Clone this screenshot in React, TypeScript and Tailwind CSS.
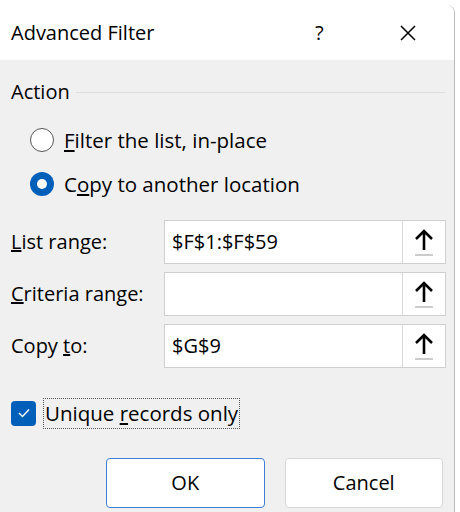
import React from "react";

function Arrow() {
  return (
    <svg width="22" height="30" viewBox="0 0 22 30">
      <path d="M11 4 V23 M3 12 L11 4 L19 12" stroke="#000" strokeWidth="2.6" fill="none" />
      <line x1="2" y1="28" x2="20" y2="28" stroke="#999" strokeWidth="1" />
    </svg>
  );
}

function Field({ label, value }: { label: React.ReactNode; value: string }) {
  return (
    <div className="flex items-center h-[44px]">
      <div className="w-[153px] text-[20px]">{label}</div>
      <div className="flex-1 flex h-[44px] border border-[#d0d0d0] bg-white">
        <div className="flex-1 flex items-center pl-[7px] text-[20px]">{value}</div>
        <div className="w-[43px] border-l border-[#d8d8d8] flex items-center justify-center">
          <Arrow />
        </div>
      </div>
    </div>
  );
}

export default function App() {
  return (
    <div className="w-[460px] h-[512px] bg-white overflow-hidden pt-[5px] text-black" style={{ fontFamily: '"Open Sans", "Noto Sans", sans-serif' }}>
      <div className="w-[455px] h-[520px] rounded-tr-[8px] border-r border-[#bbb] bg-[#f0f0f0]">
        <div className="h-[55px] bg-white flex items-center pl-[11px] rounded-tr-[8px]">
          <div className="flex-1 text-[20px]">Advanced Filter</div>
          <div className="w-[84px] text-[20px]">?</div>
          <svg width="18" height="18" viewBox="0 0 18 18" className="mr-[37px]">
            <path d="M2 2 L16 16 M16 2 L2 16" stroke="#000" strokeWidth="1.5" />
          </svg>
        </div>
        <div className="px-[11px]">
          <div className="flex items-center h-[32px] mt-[16px]">
            <span className="text-[20px]">Action</span>
            <div className="flex-1 ml-[6px] border-t border-[#dcdcdc] mr-[-2px]" />
          </div>
          <div className="flex items-center mt-[14px] h-[36px] ml-[19px]">
            <div className="w-[24px] h-[24px] rounded-full border border-[#555] bg-white" />
            <span className="ml-[10px] text-[20.5px]"><u>F</u>ilter the list, in-place</span>
          </div>
          <div className="flex items-center mt-[8px] h-[36px] ml-[19px]">
            <div className="w-[24px] h-[24px] rounded-full bg-[#005fb8] flex items-center justify-center">
              <div className="w-[10px] h-[10px] rounded-full bg-white" />
            </div>
            <span className="ml-[10px] text-[20.5px]">C<u>o</u>py to another location</span>
          </div>
          <div className="mt-[18px] flex flex-col gap-[8px] w-[435px]">
            <Field label={<><u>L</u>ist range:</>} value="$F$1:$F$59" />
            <Field label={<><u>C</u>riteria range:</>} value="" />
            <Field label={<>Copy <u>t</u>o:</>} value="$G$9" />
          </div>
          <div className="flex items-center mt-[29px] h-[32px]">
            <div className="w-[25px] h-[25px] rounded-[4px] bg-[#005fb8] flex items-center justify-center">
              <svg width="14" height="14" viewBox="0 0 14 14"><path d="M2 7 L5.5 10.5 L12 3.5" stroke="#fff" strokeWidth="1.4" fill="none" /></svg>
            </div>
            <span className="ml-[7px] px-[1px] border border-dotted border-[#555] text-[20.5px] leading-[29px]">Unique <u>r</u>ecords only</span>
          </div>
          <div className="flex mt-[29px] ml-[95px] gap-[20px]">
            <button className="w-[159px] h-[50px] bg-white border border-[#3d7fd6] rounded-[4px] text-[20px]">OK</button>
            <button className="w-[159px] h-[50px] bg-white border border-[#d8d8d8] rounded-[4px] text-[20px]">Cancel</button>
          </div>
        </div>
      </div>
    </div>
  );
}
